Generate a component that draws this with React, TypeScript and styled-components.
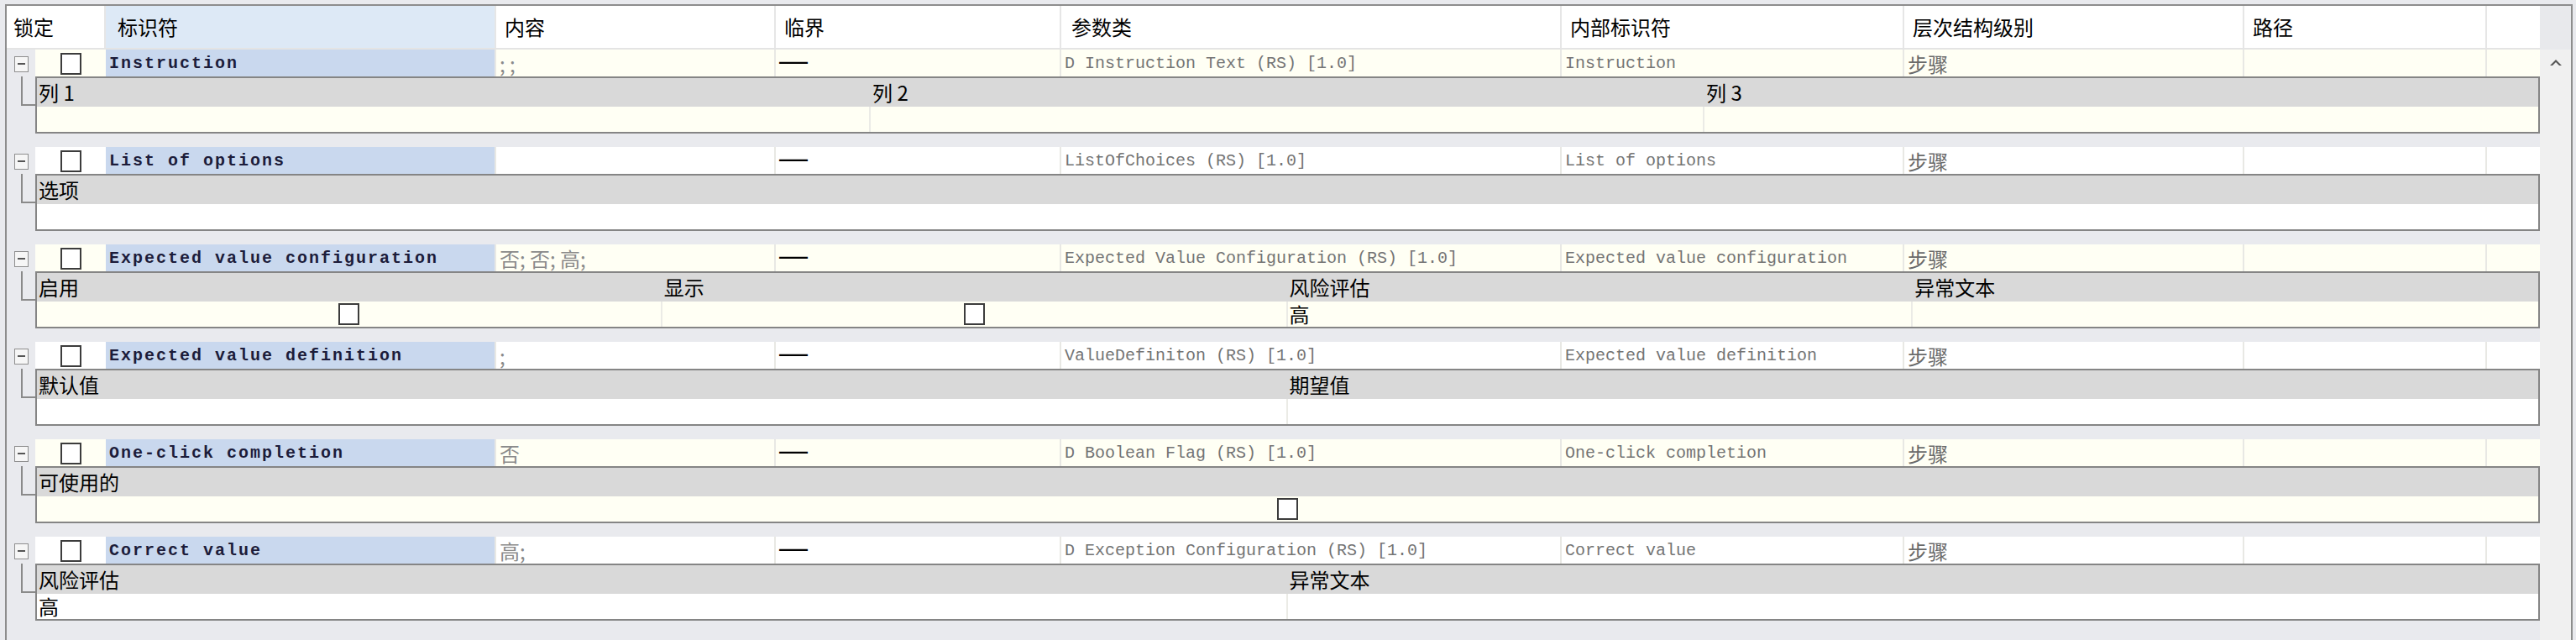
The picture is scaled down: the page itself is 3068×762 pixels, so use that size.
import React from "react";
import styled, { createGlobalStyle } from "styled-components";

const GlobalStyle = createGlobalStyle`
  html, body {
    margin: 0;
    padding: 0;
    background: #e9eaee;
  }
  body {
    font-family: "Noto Sans CJK SC", "Liberation Sans", sans-serif;
  }
`;

const HEAD_COLS = "118px 465px 333px 340px 596px 408px 405px 289px 63px";
const ROW_COLS = "34px 84px 465px 333px 340px 596px 408px 405px 289px 63px";

const CREAM = "#fffff4";

const Page = styled.div`
  padding: 5px 0 0 6px;
  height: 757px;
  overflow: hidden;
`;

const Frame = styled.div`
  display: flex;
  width: 3054px;
  height: 757px;
  border: 2px solid #8d8d8d;
  border-bottom: none;
  background: #e9eaee;
`;

const Table = styled.div`
  width: 3017px;
  display: flex;
  flex-direction: column;
`;

const HeaderRow = styled.div`
  display: grid;
  grid-template-columns: ${HEAD_COLS};
  height: 50px;
  background: #fff;
  border-bottom: 2px solid #e4e4e4;
`;

const HeaderCell = styled.div<{ $blue?: boolean; $pad?: number }>`
  display: flex;
  align-items: center;
  padding-left: ${(p) => p.$pad ?? 10}px;
  background: ${(p) => (p.$blue ? "#dde9f6" : "#fff")};
  border-right: 2px solid #e6e6e6;
  font-size: 24px;
  line-height: 1.2;
  color: #000;
  white-space: nowrap;
  &:last-child {
    border-right: none;
  }
`;

const Block = styled.div`
  display: flex;
  flex-direction: column;
  margin-bottom: 16px;
`;

const Row = styled.div<{ $cream: boolean }>`
  display: grid;
  grid-template-columns: ${ROW_COLS};
  height: 30px;
  & > div:not(:first-child) {
    background: ${(p) => (p.$cream ? CREAM : "#fff")};
  }
`;

const Indent = styled.div`
  display: flex;
  align-items: center;
  padding-left: 9px;
  background: transparent;
`;

const Expander = styled.div`
  box-sizing: border-box;
  width: 17px;
  height: 19px;
  border: 1px solid #8e8e8e;
  background: #f6f6f6;
  display: flex;
  align-items: center;
  justify-content: center;
  &::after {
    content: "";
    width: 9px;
    height: 2px;
    background: #555;
  }
`;

const Cell = styled.div<{ $blue?: boolean }>`
  display: flex;
  align-items: center;
  padding-left: 4px;
  border-right: 2px solid #e8e8e4;
  white-space: nowrap;
  line-height: 1.2;
  ${(p) => (p.$blue ? "background: #c9d8ee !important;" : "")}
  &:last-child {
    border-right: none;
  }
`;

const LockCell = styled.div`
  display: flex;
  align-items: center;
  padding-left: 30px;
`;

const Checkbox = styled.div`
  box-sizing: border-box;
  width: 25px;
  height: 26px;
  border: 2px solid #3c3c3c;
  background: #fff;
`;

const Ident = styled.span`
  font-family: "Liberation Mono", monospace;
  font-weight: bold;
  font-size: 20px;
  letter-spacing: 2px;
  line-height: 1.2;
  color: #1c1c3a;
`;

const Mono = styled.span`
  font-family: "Liberation Mono", monospace;
  font-size: 20px;
  line-height: 1.2;
  color: #747474;
`;

const Cjk = styled.span<{ $color?: string }>`
  font-family: "Noto Sans CJK SC", sans-serif;
  font-size: 24px;
  line-height: 1.2;
  color: ${(p) => p.$color ?? "#000"};
`;

const Dash = styled.span`
  font-family: "Liberation Sans", sans-serif;
  font-size: 34px;
  line-height: 1;
  color: #000;
  transform: translateY(-5px);
`;

const SubWrap = styled.div`
  display: flex;
  margin-top: 2px;
`;

const Connector = styled.div`
  width: 34px;
  flex: none;
  &::before {
    content: "";
    display: block;
    margin-left: 17px;
    width: 15px;
    height: 33px;
    border-left: 2px solid #8a8a8a;
    border-bottom: 2px solid #8a8a8a;
  }
`;

const SubGrid = styled.div<{ $n: number }>`
  flex: 1;
  display: grid;
  grid-template-columns: repeat(${(p) => p.$n}, 1fr);
  grid-template-rows: 34px 30px;
  border: 2px solid #858585;
`;

const SubHead = styled.div`
  display: flex;
  align-items: center;
  padding-left: 2px;
  background: #d9d9d9;
  font-size: 24px;
  line-height: 1.2;
  color: #000;
  white-space: nowrap;
`;

const SubCell = styled.div<{ $cream: boolean; $center?: boolean }>`
  display: flex;
  align-items: center;
  justify-content: ${(p) => (p.$center ? "center" : "flex-start")};
  padding-left: ${(p) => (p.$center ? 0 : 2)}px;
  background: ${(p) => (p.$cream ? CREAM : "#fff")};
  border-right: 2px solid #ebebe6;
  font-size: 24px;
  line-height: 1.2;
  &:last-child {
    border-right: none;
  }
`;

const Scrollbar = styled.div`
  width: 37px;
  display: flex;
  flex-direction: column;
`;

const ScrollHead = styled.div`
  height: 52px;
  background: #e8e9ec;
`;

const ScrollTrack = styled.div`
  flex: 1;
  background: #f0f0f0;
  display: flex;
  justify-content: center;
  padding-top: 10px;
`;

type SubValue = "" | "check" | string;

type BlockData = {
  ident: string;
  content: string;
  cls: string;
  internal: string;
  cream: boolean;
  heads: string[];
  values: SubValue[];
};

const blocks: BlockData[] = [
  {
    ident: "Instruction",
    content: "; ;",
    cls: "D Instruction Text (RS) [1.0]",
    internal: "Instruction",
    cream: true,
    heads: ["列 1", "列 2", "列 3"],
    values: ["", "", ""],
  },
  {
    ident: "List of options",
    content: "",
    cls: "ListOfChoices (RS) [1.0]",
    internal: "List of options",
    cream: false,
    heads: ["选项"],
    values: [""],
  },
  {
    ident: "Expected value configuration",
    content: "否; 否; 高;",
    cls: "Expected Value Configuration (RS) [1.0]",
    internal: "Expected value configuration",
    cream: true,
    heads: ["启用", "显示", "风险评估", "异常文本"],
    values: ["check", "check", "高", ""],
  },
  {
    ident: "Expected value definition",
    content: ";",
    cls: "ValueDefiniton (RS) [1.0]",
    internal: "Expected value definition",
    cream: false,
    heads: ["默认值", "期望值"],
    values: ["", ""],
  },
  {
    ident: "One-click completion",
    content: "否",
    cls: "D Boolean Flag (RS) [1.0]",
    internal: "One-click completion",
    cream: true,
    heads: ["可使用的"],
    values: ["check"],
  },
  {
    ident: "Correct value",
    content: "高;",
    cls: "D Exception Configuration (RS) [1.0]",
    internal: "Correct value",
    cream: false,
    heads: ["风险评估", "异常文本"],
    values: ["高", ""],
  },
];

function DataBlock({ b }: { b: BlockData }) {
  return (
    <Block>
      <Row $cream={b.cream}>
        <Indent>
          <Expander />
        </Indent>
        <LockCell>
          <Checkbox />
        </LockCell>
        <Cell $blue>
          <Ident>{b.ident}</Ident>
        </Cell>
        <Cell>
          <Cjk $color="#8a8a8a">{b.content}</Cjk>
        </Cell>
        <Cell>
          <Dash>—</Dash>
        </Cell>
        <Cell>
          <Mono>{b.cls}</Mono>
        </Cell>
        <Cell>
          <Mono>{b.internal}</Mono>
        </Cell>
        <Cell>
          <Cjk $color="#6a6a6a">步骤</Cjk>
        </Cell>
        <Cell />
        <Cell />
      </Row>
      <SubWrap>
        <Connector />
        <SubGrid $n={b.heads.length}>
          {b.heads.map((h) => (
            <SubHead key={h}>{h}</SubHead>
          ))}
          {b.values.map((v, i) => (
            <SubCell key={i} $cream={b.cream} $center={v === "check"}>
              {v === "check" ? <Checkbox /> : v}
            </SubCell>
          ))}
        </SubGrid>
      </SubWrap>
    </Block>
  );
}

export default function App() {
  return (
    <Page>
      <GlobalStyle />
      <Frame>
        <Table>
          <HeaderRow>
            <HeaderCell $pad={8}>锁定</HeaderCell>
            <HeaderCell $blue $pad={14}>
              标识符
            </HeaderCell>
            <HeaderCell>内容</HeaderCell>
            <HeaderCell>临界</HeaderCell>
            <HeaderCell $pad={12}>参数类</HeaderCell>
            <HeaderCell>内部标识符</HeaderCell>
            <HeaderCell>层次结构级别</HeaderCell>
            <HeaderCell>路径</HeaderCell>
            <HeaderCell />
          </HeaderRow>
          {blocks.map((b) => (
            <DataBlock key={b.ident} b={b} />
          ))}
        </Table>
        <Scrollbar>
          <ScrollHead />
          <ScrollTrack>
            <svg width="16" height="10" viewBox="0 0 16 10">
              <path d="M1 9 L8 2 L15 9 L12 9 L8 5 L4 9 Z" fill="#555" />
            </svg>
          </ScrollTrack>
        </Scrollbar>
      </Frame>
    </Page>
  );
}
